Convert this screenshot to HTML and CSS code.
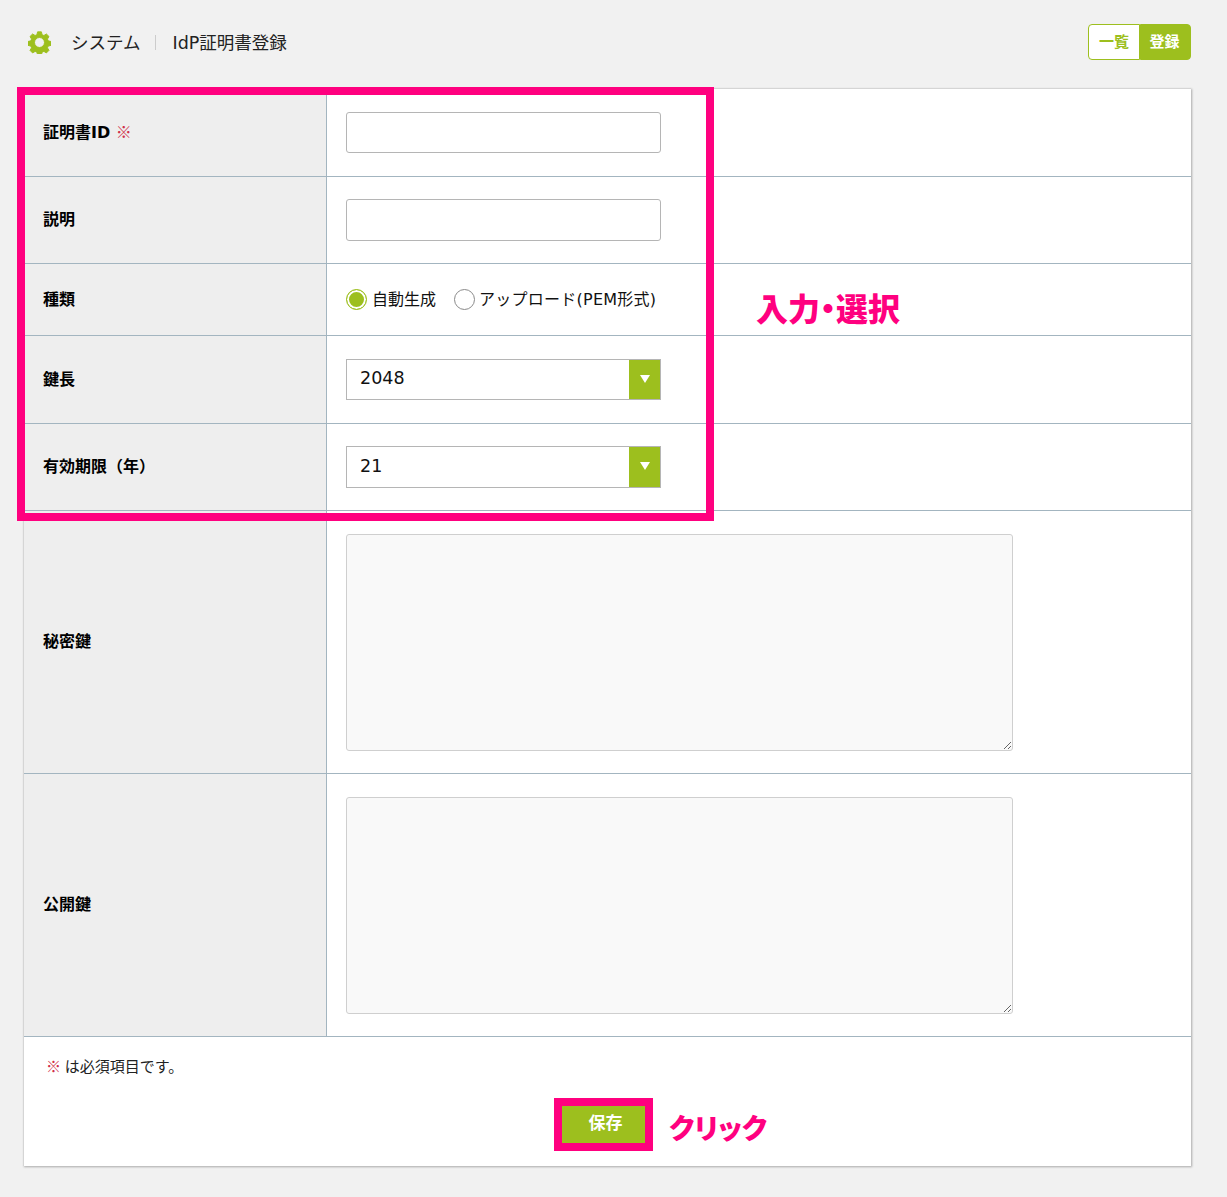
FILE: index.html
```html
<!DOCTYPE html>
<html lang="ja">
<head>
<meta charset="utf-8">
<title>IdP証明書登録</title>
<link rel="stylesheet" href="styles.css">
</head>
<body>
<header class="head">
  <svg class="gear" viewBox="0 0 24 24" width="23" height="23" aria-hidden="true">
    <path fill="#9dbf1e" stroke="#9dbf1e" stroke-width="1" stroke-linejoin="round" fill-rule="evenodd" d="M10 .9h4l.7 3 1.9.8 2.6-1.6 2.7 2.7-1.6 2.6.8 1.9 3 .7v4l-3 .7-.8 1.9 1.6 2.6-2.7 2.7-2.6-1.6-1.900.8-.7 3h-4l-.7-3-1.900-.8-2.600 1.600-2.700-2.700 1.600-2.600-.8-1.900-3-.7v-4l3-.7.8-1.900-1.600-2.600 2.700-2.700 2.600 1.600 1.900-.8zM12 6.800a5.200 5.200 0 1 0 0 10.400 5.200 5.200 0 0 0 0-10.400z"/>
  </svg>
  <span class="crumb">システム</span>
  <span class="crumb-sep"></span>
  <span class="crumb">IdP証明書登録</span>
  <nav class="tabs">
    <a class="tab">一覧</a>
    <a class="tab tab-on">登録</a>
  </nav>
</header>

<main class="card">
  <div class="row row-88">
    <div class="label">証明書ID <span class="req">※</span></div>
    <div class="field"><input class="text h41" type="text"></div>
  </div>
  <div class="row row-87">
    <div class="label">説明</div>
    <div class="field"><input class="text h42" type="text"></div>
  </div>
  <div class="row row-72">
    <div class="label">種類</div>
    <div class="field radios">
      <span class="radio radio-on"></span><span class="radio-text">自動生成</span>
      <span class="radio radio-2"></span><span class="radio-text radio-text-wide">アップロード(PEM形式)</span>
    </div>
  </div>
  <div class="row row-88">
    <div class="label">鍵長</div>
    <div class="field">
      <div class="select h41"><span class="select-value">2048</span><span class="arrow"></span></div>
    </div>
  </div>
  <div class="row row-87">
    <div class="label">有効期限（年）</div>
    <div class="field">
      <div class="select h42"><span class="select-value">21</span><span class="arrow"></span></div>
    </div>
  </div>
  <div class="row row-263">
    <div class="label">秘密鍵</div>
    <div class="field"><textarea class="area"></textarea></div>
  </div>
  <div class="row row-263">
    <div class="label">公開鍵</div>
    <div class="field"><textarea class="area"></textarea></div>
  </div>
  <footer class="foot">
    <p class="note"><span class="req">※</span><span class="note-text"> は必須項目です。</span></p>
    <div class="actions"><button class="save" type="button">保存</button></div>
  </footer>
</main>

<div class="mark mark-form"></div>
<div class="mark mark-save"></div>
<div class="call call-form">入力・選択</div>
<div class="call call-save">クリック</div>
</body>
</html>
```

FILE: styles.css
```css
* { box-sizing: border-box; }
html, body { margin: 0; padding: 0; }
body {
  position: relative;
  height: 1197px;
  overflow: hidden;
  background: #f1f1f1;
  color: #111;
  font-family: "DejaVu Sans", "Noto Sans CJK JP", sans-serif;
  font-size: 16px;
}
.head {
  height: 88px;
  padding: 0 36px 4px 28px;
  display: flex;
  align-items: center;
}
.gear { flex: none; margin-right: 20px; }
.crumb { font-size: 17.5px; color: #222; position: relative; top: -1px; }
.crumb-sep { width: 1px; height: 15px; background: #ccc; margin: 0 16px 0 15px; }
.tabs { margin-left: auto; display: flex; height: 36px; }
.tab {
  width: 52px;
  padding-bottom: 3px;
  display: flex;
  align-items: center;
  justify-content: center;
  border: 1px solid #9dbf1e;
  background: #fff;
  color: #9dbf1e;
  font-size: 15px;
  font-weight: 700;
  border-radius: 4px 0 0 4px;
}
.tab-on { width: 51px; padding-right: 2px; background: #9dbf1e; color: #fff; border-radius: 0 4px 4px 0; }

.card {
  width: 1168px;
  height: 1078px;
  margin-left: 23px;
  background: #fff;
  border: 1px solid #d5d5d5;
  border-width: 1px 0 0 1px;
  box-shadow: 1px 1px 2px #aaa;
}
.row {
  display: grid;
  grid-template-columns: 303px 1fr;
  border-bottom: 1px solid #a3b5c0;
}
.row-88 { height: 88px; }
.row-87 { height: 87px; }
.row-72 { height: 72px; }
.row-263 { height: 263px; }
.label {
  background: #eee;
  border-right: 1px solid #a3b5c0;
  padding: 0 0 3px 19px;
  display: flex;
  align-items: center;
  white-space: pre;
  font-size: 16px;
  font-weight: 700;
  color: #000;
}
.row-87 .label, .row-263 .label { padding-bottom: 5px; }
.req { color: #d0304a; font-weight: 400; font-family: "Noto Sans CJK JP", sans-serif; }
.field { padding-left: 19px; display: flex; align-items: center; }
.text {
  width: 315px;
  border: 1px solid #b5b5b5;
  border-radius: 3px;
  background: #fff;
}
.h41 { height: 41px; }
.h42 { height: 42px; }
.radios { font-size: 16px; }
.radio-text { padding-bottom: 4px; }
.radio-text-wide { letter-spacing: .25px; margin-left: -1px; }
.radio {
  flex: none;
  width: 21px;
  height: 21px;
  border: 1px solid #8a8a8a;
  border-radius: 50%;
  background: #fff;
  margin-right: 5px;
}
.radio-on {
  border-color: #9dbf1e;
  background: #9dbf1e;
  box-shadow: inset 0 0 0 2px #fff;
}
.radio-2 { margin-left: 18px; }
.select {
  width: 315px;
  display: flex;
  align-items: center;
  justify-content: space-between;
  padding-left: 13px;
  border: 1px solid #b5b5b5;
  background: #fff;
  font-size: 17.5px;
  color: #111;
}
.select-value { padding-bottom: 4px; }
.h42 .select-value { padding-bottom: 2px; }
.arrow {
  align-self: stretch;
  width: 31px;
  padding-bottom: 2px;
  background: #9dbf1e;
  display: flex;
  align-items: center;
  justify-content: center;
}
.arrow::after {
  content: "";
  width: 0;
  height: 0;
  border-left: 5px solid transparent;
  border-right: 5px solid transparent;
  border-top: 8px solid #fff;
}
.area {
  width: 667px;
  height: 217px;
  display: block;
  border: 1px solid #cfcfcf;
  border-radius: 3px;
  background: #f9f9f9;
}
.foot { padding: 19px 0 0 22px; }
.note { margin: 0; font-size: 15px; line-height: 20px; color: #222; }
.note-text { margin-left: -1px; }
.actions { display: flex; justify-content: center; padding: 26px 26px 0 0; }
.save {
  width: 92px;
  height: 44px;
  padding: 0 0 8px;
  border: 0;
  background: #9dbf1e;
  color: #fff;
  font: 700 17px "Noto Sans CJK JP", sans-serif;
}

.mark { position: absolute; border: 8px solid #ff007f; }
.mark-form { left: 17px; top: 87px; width: 697px; height: 434px; }
.mark-save { left: 554px; top: 1098px; width: 99px; height: 53px; }
.call {
  position: absolute;
  color: #ff007f;
  font-family: "Noto Sans CJK JP", sans-serif;
  font-weight: 900;
  line-height: 40px;
  white-space: nowrap;
  font-feature-settings: "palt";
}
.call-form { left: 756px; top: 287px; font-size: 32px; }
.call-save { left: 669px; top: 1107px; font-size: 28px; }
```
